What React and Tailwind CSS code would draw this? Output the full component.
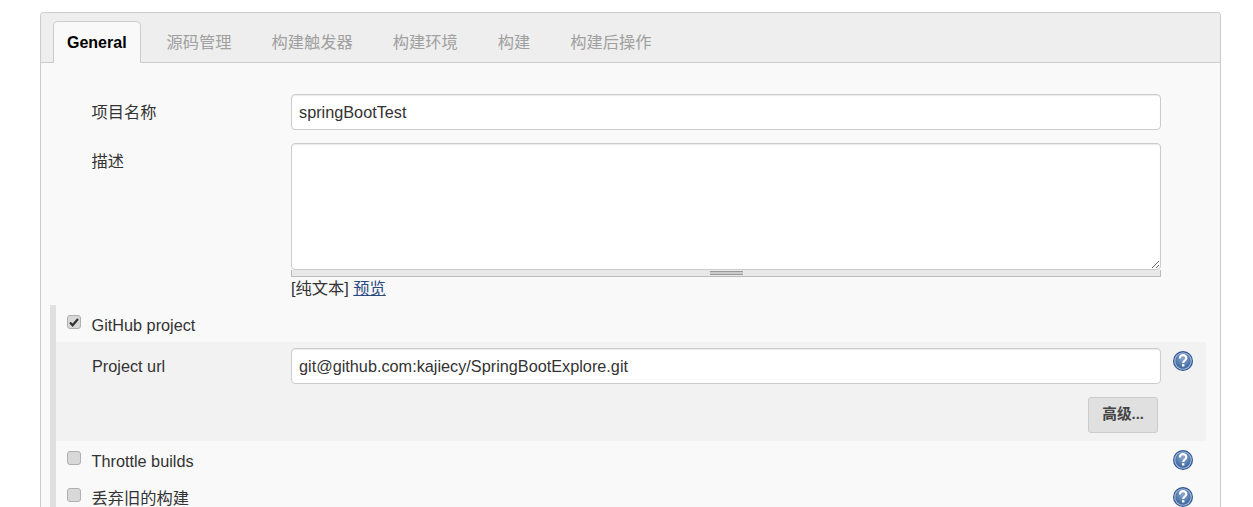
import React from "react";

const cjk = "font-['Liberation_Sans','Noto_Sans_CJK_SC',sans-serif]";

const tabs = ["源码管理", "构建触发器", "构建环境", "构建", "构建后操作"];

const HelpIcon = ({ className = "" }) => (
  <svg width="20" height="20" viewBox="0 0 20 20" className={className}>
    <defs>
      <radialGradient id="helpFill" cx="50%" cy="35%" r="65%">
        <stop offset="0%" stopColor="#8aa6cc" />
        <stop offset="75%" stopColor="#4f76ab" />
        <stop offset="100%" stopColor="#3f659c" />
      </radialGradient>
    </defs>
    <circle cx="10" cy="10" r="10" fill="#2b5394" />
    <circle cx="10" cy="10" r="8.8" fill="#a8bcd8" />
    <circle cx="10" cy="10" r="7.7" fill="url(#helpFill)" />
    <path
      d="M6.9 7.6C6.9 5.4 8.4 4.2 10.1 4.2C12 4.2 13.3 5.5 13.3 7.2C13.3 9.4 10.2 9.6 10.2 12"
      fill="none"
      stroke="#fff"
      strokeWidth="2.2"
    />
    <rect x="9" y="13.2" width="2.4" height="2.3" fill="#fff" />
  </svg>
);

const Checkbox = ({ checked }) => (
  <span className="flex h-[14px] w-[14px] shrink-0 items-center justify-center rounded-[3px] border border-[#b0b0b0] bg-[#d8d8d8]">
    {checked && (
      <svg width="12" height="12" viewBox="0 0 12 12">
        <path d="M2 6.5l2.6 2.8L10 3" fill="none" stroke="#333" strokeWidth="2.2" />
      </svg>
    )}
  </span>
);

const OptionRow = ({ label, checked, help }) => (
  <div className="flex h-[37px] pt-[10px] pl-[11px] pr-[13px]">
    <Checkbox checked={checked} />
    <span className="ml-[10.5px] -mt-px text-[16.25px] leading-[22px] text-[#333]">{label}</span>
    {help && <HelpIcon className="ml-auto -mt-[1px]" />}
  </div>
);

const inputClass =
  "h-9 w-[870px] rounded-[4px] border border-[#ccc] bg-white px-[7px] pt-px text-[16.25px] text-[#333] shadow-[inset_0_1px_1px_rgba(0,0,0,0.08)] outline-none";

export default function App() {
  return (
    <div className={`h-screen overflow-hidden bg-white pt-3 pl-10 ${cjk}`}>
      <div className="w-[1181px] rounded-t-[4px] border border-b-0 border-[#ccc] bg-[#f9f9f9]">
        {/* tabs */}
        <div className="flex h-[50px] gap-3 rounded-t-[4px] border-b border-[#ccc] bg-[#eee] pt-2 pl-3">
          <div className="h-[42px] rounded-t-[5px] border border-b-0 border-[#ccc] bg-[#f9f9f9] px-[13px] text-base leading-[41px] font-bold text-black">
            General
          </div>
          {tabs.map((tab) => (
            <div key={tab} className="h-[42px] border border-transparent px-[13px] text-[16.25px] leading-[41px] text-[#a0a0a0]">
              {tab}
            </div>
          ))}
        </div>

        {/* name + description */}
        <div className="pt-[31px] pl-[50.5px]">
          <div className="flex">
            <div className="h-9 w-[199.5px] text-[16.25px] leading-9 text-[#333]">项目名称</div>
            <input className={inputClass} defaultValue="springBootTest" readOnly />
          </div>
          <div className="mt-[13px] flex">
            <div className="h-9 w-[199.5px] text-[16.25px] leading-9 text-[#333]">描述</div>
            <div className="w-[870px]">
              <textarea className="block h-[127px] w-[870px] rounded-[4px] border border-[#ccc] bg-white shadow-[inset_0_1px_1px_rgba(0,0,0,0.08)] outline-none" readOnly />
              <div className="flex h-[7px] items-center justify-center border-x border-b border-[#bbb] bg-[#e8e8e8]">
                <div className="h-[4px] w-[33px] border-y border-[#999] bg-[#ccc]" />
              </div>
              <div className="mt-px mb-px text-[16.25px] leading-[20px] text-[#333]">
                [纯文本] <a className="text-[#2a4a7f] underline">预览</a>
              </div>
            </div>
          </div>
        </div>

        {/* options */}
        <div className="mt-[6px] ml-[9px] w-[1156px] border-l-[6px] border-[#e0e0e0]">
          <OptionRow label="GitHub project" checked />
          <div className="h-[99px] bg-[#f2f2f2] pt-[6px] pr-[13px]">
            <div className="flex pl-9">
              <div className="h-9 w-[199px] text-[16.25px] leading-9 text-[#333]">Project url</div>
              <input className={inputClass} defaultValue="git@github.com:kajiecy/SpringBootExplore.git" readOnly />
              <HelpIcon className="mt-[3px] ml-auto" />
            </div>
            <div className="mt-[13px] flex justify-end pr-[35px]">
              <button className="h-9 w-[70px] rounded-[3px] border border-[#ccc] bg-[#e0e0e0] pb-px text-[14.7px] font-bold text-[#444]">
                高级...
              </button>
            </div>
          </div>
          <OptionRow label="Throttle builds" help />
          <OptionRow label="丢弃旧的构建" help />
        </div>
      </div>
    </div>
  );
}
